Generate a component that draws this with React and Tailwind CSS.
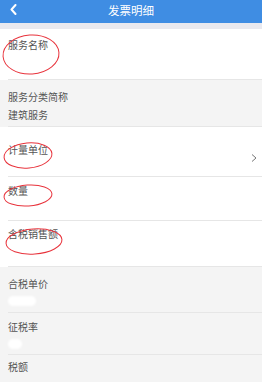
import React from "react";

function Row({ h, pt, label, value, gray, sep = true, chevron, blur }) {
  return (
    <div className={(gray ? "bg-[#f4f4f4]" : "bg-white") + " relative"} style={{ height: h }}>
      <div className="ml-2 h-full flex flex-col border-b border-[#e6e6e6]" style={{ paddingTop: pt, borderBottomWidth: sep ? 1 : 0 }}>
        <div className="text-[10px] leading-[18px] text-[#555]">{label}</div>
        {value && <div className="text-[10px] leading-[18px] text-[#555]">{value}</div>}
        {blur ? <div className="mt-[3px] h-[10px] rounded-full bg-white blur-[1px]" style={{ width: blur }} /> : null}
      </div>
      {chevron && (
        <svg className="absolute right-[4px] top-[26px]" width="8" height="10" viewBox="0 0 8 10">
          <path d="M2 1.5 L6 5 L2 8.5" fill="none" stroke="#777" strokeWidth="1" />
        </svg>
      )}
    </div>
  );
}

export default function App() {
  return (
    <div className="relative w-[262px] h-[382px] overflow-hidden bg-white" style={{ fontFamily: '"Noto Sans CJK SC", "Noto Sans", sans-serif' }}>
      <div className="h-[23px] bg-[#3f8de3] relative flex items-center justify-center">
        <svg className="absolute left-[9px] top-[4px]" width="9" height="11" viewBox="0 0 9 11">
          <path d="M6.5 1 L2.5 5.5 L6.5 10" fill="none" stroke="white" strokeWidth="2" strokeLinecap="round" strokeLinejoin="round" />
        </svg>
        <span className="text-white text-[11.5px] leading-none -mt-[2px]">发票明细</span>
      </div>
      <div className="h-[6px] bg-[#e9e9ef]" />
      <Row h={51} pt={7} label="服务名称" />
      <Row h={47} pt={8} label="服务分类简称" value="建筑服务" gray />
      <Row h={50} pt={14} label="计量单位" chevron />
      <Row h={44} pt={5} label="数量" />
      <Row h={46} pt={4} label="含税销售额" />
      <Row h={46} pt={8} label="合税单价" gray blur={28} />
      <Row h={42} pt={5} label="征税率" gray blur={14} />
      <Row h={40} pt={3} label="税额" gray sep={false} />

      <svg className="absolute left-0 top-0 pointer-events-none" width="262" height="382" viewBox="0 0 262 382">
        <g fill="none" stroke="#e8333c" strokeWidth="1">
          <ellipse cx="31" cy="54.5" rx="28" ry="19.5" transform="rotate(-4 31 54.5)" />
          <ellipse cx="28" cy="155.5" rx="24" ry="12.5" transform="rotate(-5 28 155.5)" />
          <ellipse cx="28" cy="195.5" rx="24" ry="10.5" transform="rotate(-4 28 195.5)" />
          <ellipse cx="34" cy="241.5" rx="28" ry="12.5" transform="rotate(-4 34 241.5)" />
        </g>
      </svg>
    </div>
  );
}
